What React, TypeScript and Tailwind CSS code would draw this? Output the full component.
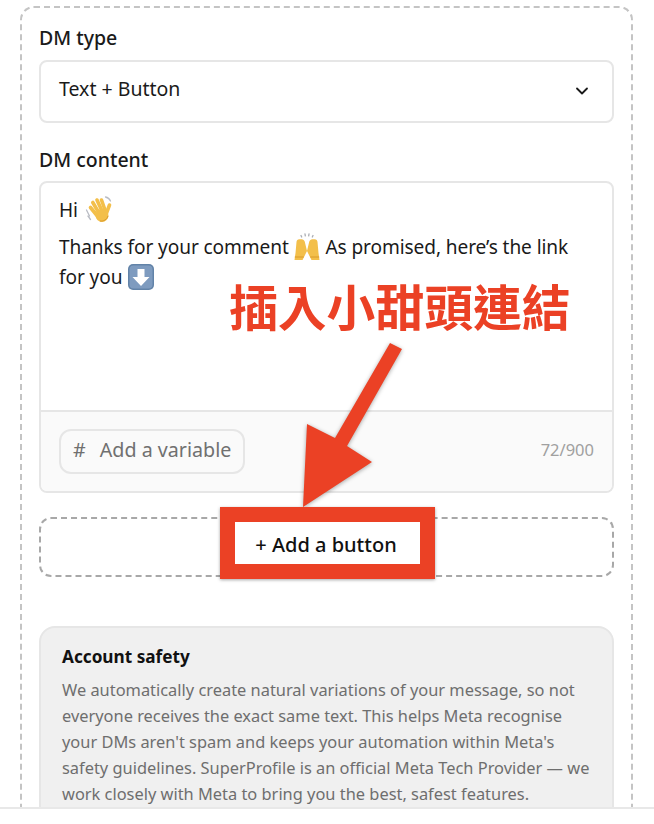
function WaveEmoji() {
  return (
    <svg viewBox="0 0 28 28" className="ml-[2px] inline-block h-[28px] w-[28px] align-[-7px]">
      <g stroke="#b9bcc4" strokeWidth="1.300" fill="none" strokeLinecap="round">
        <path d="M1.500 14l3 6" />
        <path d="M3 20l2.500 3.500" />
        <path d="M20.500 1c2.500.5 4 1.800 5 4" />
      </g>
      <g stroke="#f3bf4a" strokeWidth="3.600" strokeLinecap="round" fill="none">
        <path d="M5.500 11.500 12 19.500" />
        <path d="M7.800 6.500 14 17" />
        <path d="M12 4 17 15" />
        <path d="M16.500 4 20 14" />
        <path d="M24.500 9 21.500 17" />
      </g>
      <circle cx="17" cy="19.500" r="6.500" fill="#f3bf4a" />
      <path d="M15 25c3.500.6 7-1.500 8-5" stroke="#d99a2b" strokeWidth="1" fill="none" />
    </svg>
  );
}

function HandsEmoji() {
  return (
    <svg viewBox="0 0 28 28" className="-ml-[1px] inline-block h-[28px] w-[28px] align-[-7px]">
      <g stroke="#a9acb3" strokeWidth="1.300" strokeLinecap="round">
        <path d="M8 2.500l.7 1.500" />
        <path d="M12 1l.3 1.800" />
        <path d="M16 1l-.3 1.800" />
        <path d="M20 2.500l-.7 1.500" />
      </g>
      <path d="M3.500 9c0-1.600 1.200-2.800 2.800-2.800h2.400c1.500 0 2.600 1 3.100 2.500L14 18l-4.500 9H1.500l1-7z" fill="#f3bf4a" />
      <path d="M24.500 9c0-1.600-1.200-2.800-2.800-2.800h-2.400c-1.500 0-2.600 1-3.100 2.500L14 18l4.500 9h8l-1-7z" fill="#f3bf4a" />
      <path d="M1.800 24h9M26.200 24h-9" stroke="#d99a2b" strokeWidth="1" />
    </svg>
  );
}

function DownEmoji() {
  return (
    <svg viewBox="0 0 28 28" className="inline-block h-[28px] w-[28px] align-[-7px]">
      <rect x="1" y="1" width="26" height="26" rx="5" fill="#6283a8" />
      <rect x="2.500" y="2.500" width="23" height="23" rx="4" fill="#7e9bbf" />
      <path d="M10.500 6h7v8h5L14 23 5.500 14h5z" fill="#fff" />
    </svg>
  );
}

function Annotation() {
  return (
    <>
      <svg
        viewBox="0 0 654 824"
        className="pointer-events-none absolute left-0 top-0 h-[824px] w-[654px] drop-shadow-[0_1px_2px_rgba(0,0,0,0.35)]"
      >
        <polygon points="390,343 402,349 347,446 372,462 303,507 307,424 335,438" fill="#eb4125" />
      </svg>
      <div className="absolute left-[220px] top-[507px] flex h-[72px] w-[215px] items-center justify-center border-[15px] border-[#eb4125] bg-white pr-[3px] pt-[4px] text-[20px] font-medium text-[#111] shadow-[0_1px_3px_rgba(0,0,0,0.35)]">
        + Add a button
      </div>
      <div className="absolute left-[229px] top-[273px] whitespace-nowrap font-['Noto_Sans_CJK_TC',sans-serif] text-[48.800px] font-bold leading-[64px] text-[#eb4125]">
        插入小甜頭連結
      </div>
    </>
  );
}

export default function App() {
  return (
    <div className="relative flex h-[824px] w-[654px] flex-col overflow-hidden bg-white font-['Noto_Sans',sans-serif] text-[#1a1a1a]">
      <div className="min-h-0 flex-1 overflow-hidden pl-[20px] pr-[21px] pt-[6px]">
        <div className="h-[900px] rounded-t-[14px] border-x-2 border-t-2 border-dashed border-[#c4c4c4] pl-[17px] pr-[17px] pt-[16px]">
          <div className="text-[19.500px] font-medium leading-[28px]">DM type</div>
          <div className="mt-[8px] flex h-[63px] items-center justify-between rounded-[8px] border-2 border-[#e6e6e6] pb-[5px] pl-[18px] pr-[20px]">
            <span className="text-[19.500px] leading-[28px]">Text + Button</span>
            <svg viewBox="0 0 24 24" className="mt-[3px] h-[20px] w-[20px]" fill="none" stroke="#1a1a1a" strokeWidth="2.200" strokeLinecap="round" strokeLinejoin="round">
              <path d="m6 9 6 6 6-6" />
            </svg>
          </div>

          <div className="mt-[23px] text-[19.500px] font-medium leading-[28px]">DM content</div>
          <div className="mt-[7px] overflow-hidden rounded-[8px] border-2 border-[#e6e6e6]">
            <div className="h-[227px] px-[18px] pt-[12px] text-[19.100px] tracking-[-0.1px]">
              <div className="leading-[30px]">Hi <WaveEmoji /></div>
              <div className="mt-[7px] leading-[30px]">
                Thanks for your comment <HandsEmoji /> As promised, here’s the link for you <DownEmoji />
              </div>
            </div>
            <div className="flex h-[81px] items-center justify-between border-t-2 border-[#e6e6e6] bg-[#fafafa] px-[18px]">
              <div className="flex h-[45px] w-[186px] items-center gap-[14px] rounded-[12px] border-2 border-[#e6e6e6] pb-[3px] pl-[12px] text-[19.700px] text-[#707070]">
                <span>#</span>
                <span>Add a variable</span>
              </div>
              <span className="pb-[3px] text-[16.500px] text-[#a0a0a0]">72/900</span>
            </div>
          </div>

          <div className="mt-[24px] h-[60px] rounded-[12px] border-2 border-dashed border-[#a8a8a8]" />

          <div className="mt-[49px] rounded-[16px] border-2 border-[#e6e6e6] bg-[#f0f0f0] px-[21px] pb-[40px] pt-[16px]">
            <div className="text-[17.200px] font-bold leading-[26px] text-[#111]">Account safety</div>
            <p className="mt-[7px] text-[16.400px] leading-[26px] text-[#6e6e6e]">
              We automatically create natural variations of your message, so not everyone receives the exact same text. This helps Meta recognise your DMs aren't spam and keeps your automation within Meta's safety guidelines. SuperProfile is an official Meta Tech Provider — we work closely with Meta to bring you the best, safest features.
            </p>
          </div>
        </div>
      </div>
      <div className="h-[17px] shrink-0 border-t-2 border-[#e8e8e8] bg-white" />
      <Annotation />
    </div>
  );
}
